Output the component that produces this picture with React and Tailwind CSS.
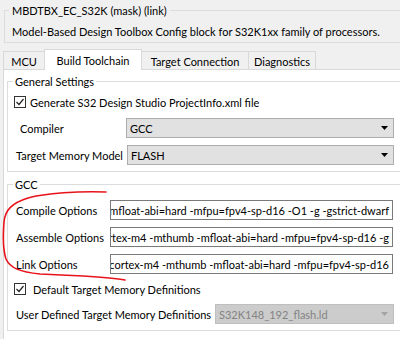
import React from "react";

const ArrowDown = ({ color = "#000" }) => (
  <svg width="7" height="4" viewBox="0 0 7 4">
    <polygon points="0,0 7,0 3.5,4" fill={color} />
  </svg>
);

const Check = () => (
  <div className="w-[12px] h-[12px] border border-[#333333] bg-white flex items-center justify-center shrink-0">
    <svg width="10" height="10" viewBox="0 0 10 10">
      <path d="M1.5 5 L4 7.5 L8.5 2" fill="none" stroke="#222" strokeWidth="1.2" />
    </svg>
  </div>
);

const Select = ({ value, width, disabled }) => (
  <div
    className={`h-[20px] shrink-0 flex items-center justify-between pl-[3px] pr-[5px] border ${
      disabled
        ? "bg-[#cccccc] border-[#bfbfbf] text-[#838383]"
        : "bg-[#e1e1e1] border-[#adadad] text-black"
    }`}
    style={{ width }}
  >
    <span>{value}</span>
    <ArrowDown color={disabled ? "#a3a3a3" : "#000"} />
  </div>
);

const TextBox = ({ value }) => (
  <div className="w-[283px] h-[20px] shrink-0 border border-[#7a7a7a] bg-white flex items-center justify-end overflow-hidden whitespace-nowrap pr-[3px]">
    <span>{value}</span>
  </div>
);

const tabs = [
  { name: "MCU", w: "w-[42px]" },
  { name: "Build Toolchain", w: "w-[98px]", active: true },
  { name: "Target Connection", w: "w-[108px]" },
  { name: "Diagnostics", w: "w-[68px]" },
];

export default function App() {
  return (
    <div className="w-[400px] h-[339px] bg-[#f0f0f0] overflow-hidden relative font-['Lato','Liberation_Sans',sans-serif] text-[11px] leading-[15px] text-black whitespace-nowrap">
      <div className="w-[440px] flex flex-col h-full">
        {/* mask header */}
        <fieldset className="w-[430px] ml-[4px] mt-[3px] border border-[#dcdcdc]">
          <legend className="ml-[4px] px-[3px]">MBDTBX_EC_S32K (mask) (link)</legend>
          <div className="pt-[6px] pb-[3px] pl-[7px]">
            Model-Based Design Toolbox Config block for S32K1xx family of processors.
          </div>
        </fieldset>

        {/* tabs */}
        <div className="flex items-end h-[21px] mt-[6px] mb-[-1px] ml-[3px] relative z-10">
          {tabs.map((t, i) => (
            <div
              key={t.name}
              className={`${t.w} ${i > 0 ? "ml-[-1px]" : ""} flex items-center justify-center border-[#d9d9d9] ${
                t.active
                  ? "h-[21px] bg-white border-l border-t border-r pt-[1px] relative z-10"
                  : "h-[19px] bg-[#f0f0f0] border pt-[2px]"
              }`}
            >
              {t.name}
            </div>
          ))}
        </div>

        {/* tab page */}
        <div className="flex-1 bg-white border-t border-l border-[#d9d9d9] ml-[3px] pt-[4px]">
          <fieldset className="w-[425px] ml-[3px] border border-[#dcdcdc] pb-[6px]">
            <legend className="ml-[5px] px-[2px]">General Settings</legend>
            <div className="flex items-center h-[14px] mt-[6px] pl-[6px]">
              <Check />
              <span className="ml-[4px]">Generate S32 Design Studio ProjectInfo.xml file</span>
            </div>
            <div className="flex items-center mt-[9px]">
              <span className="w-[118px] pl-[12px]">Compiler</span>
              <Select value="GCC" width={268} />
            </div>
            <div className="flex items-center mt-[7px]">
              <span className="w-[119px] pl-[8px]">Target Memory Model</span>
              <Select value="FLASH" width={267} />
            </div>
          </fieldset>

          <fieldset className="w-[425px] ml-[3px] mt-[5px] border border-[#dcdcdc] pb-[6px]">
            <legend className="ml-[5px] px-[2px]">GCC</legend>
            <div className="flex items-center mt-[8px]">
              <span className="w-[102px] pl-[8px]">Compile Options</span>
              <TextBox value="-mcpu=cortex-m4 -mthumb -mfloat-abi=hard -mfpu=fpv4-sp-d16 -O1 -g -gstrict-dwarf" />
            </div>
            <div className="flex items-center mt-[7px]">
              <span className="w-[102px] pl-[8px]">Assemble Options</span>
              <TextBox value="-mcpu=cortex-m4 -mthumb -mfloat-abi=hard -mfpu=fpv4-sp-d16 -g" />
            </div>
            <div className="flex items-center mt-[7px]">
              <span className="w-[102px] pl-[8px]">Link Options</span>
              <TextBox value="-mcpu=cortex-m4 -mthumb -mfloat-abi=hard -mfpu=fpv4-sp-d16" />
            </div>
            <div className="flex items-center h-[14px] mt-[8px] pl-[6px]">
              <Check />
              <span className="ml-[7px]">Default Target Memory Definitions</span>
            </div>
            <div className="flex items-center mt-[8px]">
              <span className="w-[207px] pl-[8px]">User Defined Target Memory Definitions</span>
              <Select value="S32K148_192_flash.ld" width={179} disabled />
            </div>
          </fieldset>
        </div>
      </div>

      {/* red hand-drawn annotation */}
      <svg className="absolute inset-0 pointer-events-none" width="400" height="339">
        <path
          d="M106,192 C80,191 45,193 28,198 C12,203 5,210 4,222 C3,235 3,250 6,259 C10,268 20,272 40,274 L83,276 C100,277 115,278 125,280"
          fill="none"
          stroke="#e8141b"
          strokeWidth="1.6"
          strokeLinecap="round"
        />
      </svg>
    </div>
  );
}
